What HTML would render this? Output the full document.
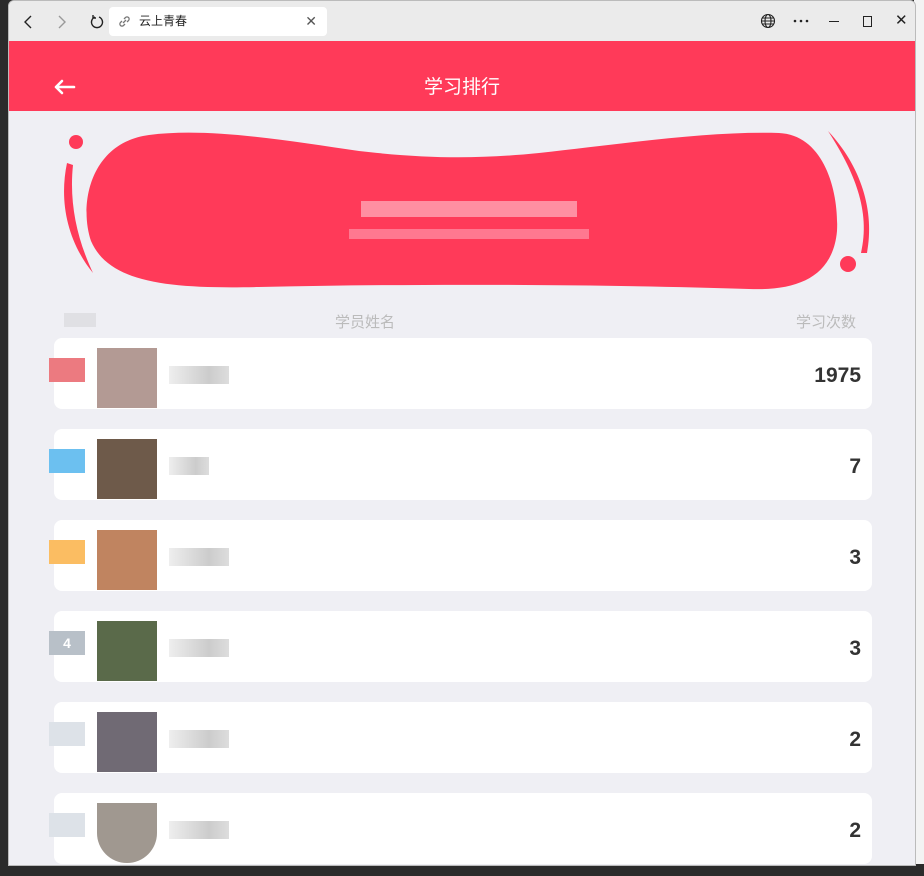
<!DOCTYPE html>
<html><head><meta charset="utf-8"><style>
*{margin:0;padding:0;box-sizing:border-box}
body{width:924px;height:876px;overflow:hidden;background:#2b2b2b;font-family:"Liberation Sans","Noto Sans CJK SC",sans-serif;position:relative}
.win{position:absolute;left:8px;top:0;width:908px;height:866px;background:#efeff4;border:1px solid #bbb;border-radius:6px 6px 0 0;overflow:hidden}
.tb{position:absolute;left:0;top:0;width:100%;height:40px;background:#ebebeb}
.tab{position:absolute;left:100px;top:6px;width:218px;height:29px;background:#fff;border-radius:4px;font-size:12px;color:#222;line-height:29px;padding-left:30px}
.hdr{position:absolute;left:0;top:40px;width:100%;height:70px;background:#ff3a59;color:#fff;font-size:19px;text-align:center;line-height:94px}
.card{position:absolute;left:45px;width:818px;height:71px;background:#fff;border-radius:8px}
.num{position:absolute;right:11px;top:2px;line-height:71px;font-weight:bold;font-size:21px;color:#333}
.av{position:absolute;left:43px;top:10px;width:60px;height:60px}
.nm{position:absolute;left:115px;top:28px;width:60px;height:18px;background:linear-gradient(90deg,#eee,#ddd,#ccc,#ddd)}
.rk{position:absolute;left:-5px;top:20px;width:36px;height:24px}
.lbl{position:absolute;top:310px;font-size:15px;color:#bbb}
</style></head><body>
<div style="position:absolute;right:0;top:0;width:10px;height:876px;background:#f3f3f3"></div>
<div style="position:absolute;left:0;bottom:0;width:924px;height:12px;background:#2b2b2b"></div>
<div class="win">
<div class="tb">
<svg style="position:absolute;left:12px;top:12px" width="90" height="18" fill="none" stroke="#222" stroke-width="1.4"><path d="M10 3L4 9l6 6"/><path d="M38 3l6 6-6 6" stroke="#999"/><path d="M78 4a5.5 5.5 0 1 1-4 0M72 2v3h3"/></svg>
<div class="tab">云上青春<span style="position:absolute;right:10px;color:#555;font-size:14px">✕</span>
<svg style="position:absolute;left:9px;top:8px" width="13" height="13" fill="none" stroke="#777" stroke-width="1.3"><path d="M5 8l3-3M4 6L2.5 7.5a2 2 0 0 0 3 3L7 9M9 7l1.5-1.5a2 2 0 0 0-3-3L6 4"/></svg></div>
<svg style="position:absolute;left:751px;top:12px" width="16" height="16" fill="none" stroke="#222" stroke-width="1.1"><circle cx="8" cy="8" r="6.5"/><ellipse cx="8" cy="8" rx="3" ry="6.5"/><path d="M1.5 8h13M2.5 5h11M2.5 11h11"/></svg>
<svg style="position:absolute;left:784px;top:18px" width="16" height="4" fill="#222"><circle cx="2" cy="2" r="1.3"/><circle cx="8" cy="2" r="1.3"/><circle cx="14" cy="2" r="1.3"/></svg>
<div style="position:absolute;left:820px;top:20px;width:10px;height:1px;background:#222"></div>
<div style="position:absolute;left:854px;top:15px;width:9px;height:11px;border:1.3px solid #222"></div>
<div style="position:absolute;left:886px;top:10px;font-size:15px;color:#222">✕</div>
</div>
<div class="hdr">学习排行
<svg style="position:absolute;left:44px;top:37px" width="24" height="18" fill="none" stroke="#fff" stroke-width="2.6" stroke-linecap="round" stroke-linejoin="round"><path d="M21 9H3M9 3L3 9l6 6"/></svg>
</div>
<svg style="position:absolute;left:0;top:110px" width="908" height="190">
<path fill="#ff3a59" d="M140 24C200 16 280 30 350 40C420 48 470 48 530 42C620 32 700 20 770 22C815 24 830 80 828 120C824 165 790 180 740 178C620 174 430 172 250 176C160 178 100 172 82 130C70 95 80 32 140 24Z"/>
<circle cx="67" cy="31" r="7" fill="#ff3a59"/>
<path fill="#ff3a59" d="M58 52C50 90 58 130 84 162C68 128 60 92 64 54Z"/>
<path fill="#ff3a59" d="M819 20C845 60 862 100 852 142L858 142C866 100 852 55 819 20Z"/>
<circle cx="839" cy="153" r="8" fill="#ff3a59"/>
<rect x="352" y="90" width="216" height="16" fill="#ff8fa2"/>
<rect x="340" y="118" width="240" height="10" fill="#ff7890"/>
</svg>
<div style="position:absolute;left:55px;top:312px;width:32px;height:14px;background:#e0e0e4"></div>
<div class="lbl" style="left:326px">学员姓名</div>
<div class="lbl" style="left:787px">学习次数</div>
<div class="card" style="top:337px"><div class="rk" style="background:#ec7a80"></div><div class="av" style="background:#b39a94"></div><div class="nm"></div><div class="num">1975</div></div>
<div class="card" style="top:428px"><div class="rk" style="background:#6cc0f0"></div><div class="av" style="background:#6e5a4a"></div><div class="nm" style="width:40px"></div><div class="num">7</div></div>
<div class="card" style="top:519px"><div class="rk" style="background:#fbbd62"></div><div class="av" style="background:#c08460"></div><div class="nm"></div><div class="num">3</div></div>
<div class="card" style="top:610px"><div class="rk" style="background:#b8c0c8;color:#fff;font-weight:bold;font-size:14px;text-align:center;line-height:24px">4</div><div class="av" style="background:#5a6a4a"></div><div class="nm"></div><div class="num">3</div></div>
<div class="card" style="top:701px"><div class="rk" style="background:#dde2e8"></div><div class="av" style="background:#706a74"></div><div class="nm"></div><div class="num">2</div></div>
<div class="card" style="top:792px"><div class="rk" style="background:#dde2e8"></div><div class="av" style="background:#a09890;border-radius:0 0 30px 30px"></div><div class="nm"></div><div class="num">2</div></div>
</div>
</body></html>
